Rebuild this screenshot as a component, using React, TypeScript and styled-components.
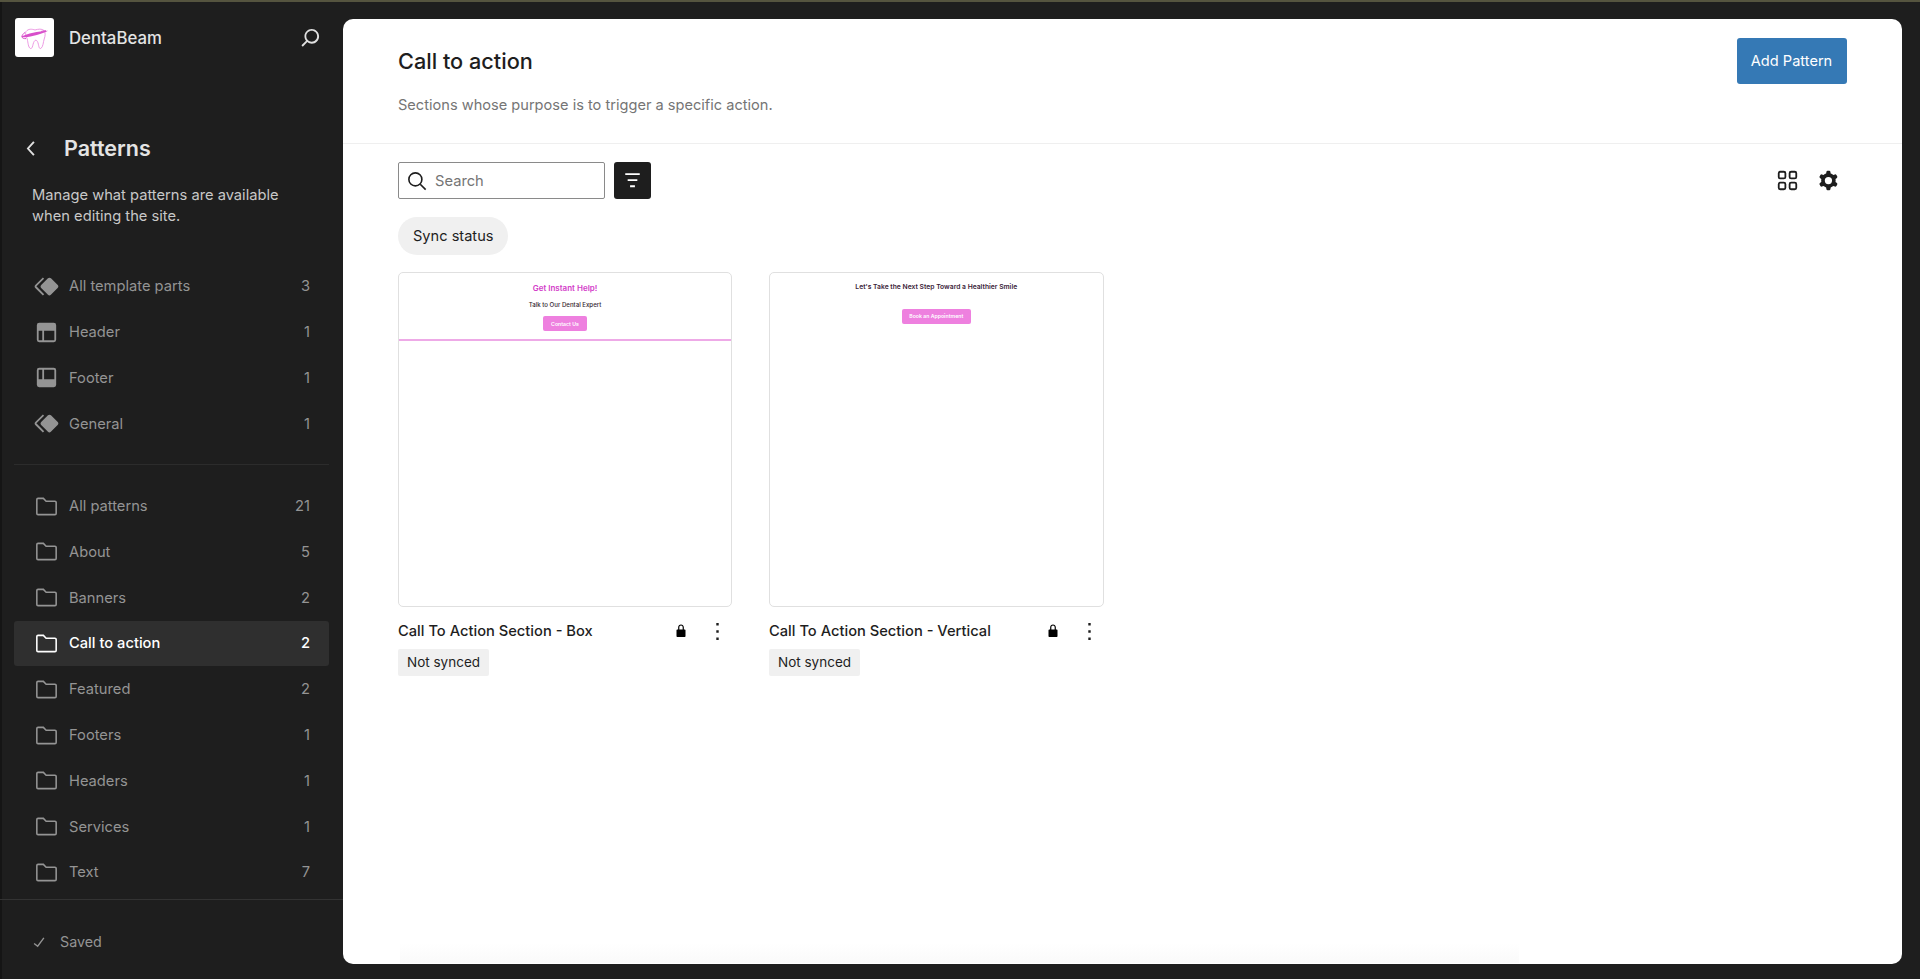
import React from "react";
import styled, { createGlobalStyle } from "styled-components";

const Global = createGlobalStyle`
  html, body { margin: 0; padding: 0; height: 100%; background: #1e1e1e; }
  body { font-family: Inter, "Liberation Sans", sans-serif; -webkit-font-smoothing: antialiased; overflow: hidden; }
  #root { height: 100%; }
`;

const Page = styled.div`
  display: flex;
  height: 979px;
  box-sizing: border-box;
  background: #1e1e1e;
  border-top: 2px solid #55543f;
`;

const Sidebar = styled.aside`
  width: 343px;
  flex: none;
  display: flex;
  flex-direction: column;
  color: #e0e0e0;
  box-shadow: inset 2px 0 0 #151515;
`;

const SiteHeader = styled.header`
  display: flex;
  align-items: center;
  height: 39px;
  margin-top: 16px;
  padding: 0 18px 0 14.5px;
`;

const LogoTile = styled.div`
  width: 39px;
  height: 39px;
  flex: none;
  background: #fff;
  border-radius: 3px;
  display: flex;
  align-items: center;
  justify-content: center;
`;

const SiteName = styled.span`
  margin-left: 15.5px;
  font-size: 16.8px;
  font-weight: 500;
  color: #e4e4e4;
  flex: 1;
`;

const HeaderIcon = styled.svg`
  width: 29px;
  height: 29px;
  fill: #e0e0e0;
  flex: none;
`;

const NavTitleRow = styled.div`
  display: flex;
  align-items: center;
  height: 30px;
  margin-top: 76px;
  padding-left: 17px;
`;

const BackIcon = styled.svg`
  width: 29px;
  height: 29px;
  fill: #e0e0e0;
  flex: none;
`;

const NavTitle = styled.h1`
  margin: 0 0 0 18px;
  font-size: 21.5px;
  font-weight: 600;
  color: #e4e4e4;
  line-height: 30px;
`;

const NavDescription = styled.p`
  margin: 21.5px 0 0;
  padding: 0 32px;
  font-size: 14.7px;
  line-height: 21px;
  color: #c8c8c8;
`;

const NavList = styled.ul<{ $top: number }>`
  list-style: none;
  margin: ${(p) => p.$top}px 0 0;
  padding: 0;
`;

const NavRow = styled.li<{ $active?: boolean }>`
  display: flex;
  align-items: center;
  height: 45.8px;
  box-sizing: border-box;
  margin: 0 14px;
  padding: 0 19px 0 17.5px;
  border-radius: 3px;
  font-size: 14.7px;
  font-weight: ${(p) => (p.$active ? 500 : 400)};
  color: ${(p) => (p.$active ? "#fff" : "#949494")};
  background: ${(p) => (p.$active ? "#2f2f2f" : "transparent")};
`;

const NavIcon = styled.svg<{ $active?: boolean }>`
  width: 29px;
  height: 29px;
  flex: none;
  fill: ${(p) => (p.$active ? "#fff" : "#949494")};
  margin-right: 8.5px;
`;

const FolderShape = styled.path`
  fill: none;
  stroke: currentColor;
  stroke-width: 1.3;
`;

const NavLabel = styled.span`
  flex: 1;
`;

const Divider = styled.div`
  height: 1px;
  margin: 17.5px 14px 0;
  background: #2c2c2c;
`;

const SideFooter = styled.div`
  margin-top: 3.5px;
  border-top: 1px solid #333;
  flex: 1;
  padding: 30px 0 0 28px;
  font-size: 14.3px;
  color: #949494;
`;

const SavedRow = styled.div`
  display: flex;
  align-items: center;
  height: 24px;
`;

const SavedIcon = styled.svg`
  width: 22px;
  height: 22px;
  fill: #949494;
  margin-right: 10px;
  flex: none;
`;

const Panel = styled.main`
  width: 1559px;
  flex: none;
  box-sizing: border-box;
  height: 945px;
  margin-top: 17px;
  background: #fff;
  border-radius: 10px;
  display: flex;
  flex-direction: column;
  color: #1e1e1e;
  overflow: hidden;
  position: relative;
`;

const PanelHeader = styled.header`
  display: flex;
  justify-content: space-between;
  align-items: flex-start;
  height: 125px;
  box-sizing: border-box;
  flex: none;
  padding: 18.5px 55.5px 0 55px;
  border-bottom: 1px solid #efefef;
`;

const Title = styled.h2`
  margin: 7px 0 0;
  font-size: 21.7px;
  line-height: 32px;
  font-weight: 500;
  color: #1e1e1e;
`;

const Subtitle = styled.p`
  margin: 16px 0 0;
  font-size: 14.6px;
  line-height: 24px;
  color: #757575;
`;

const PrimaryButton = styled.button`
  width: 110px;
  height: 46px;
  border: 0;
  border-radius: 3px;
  background: #3579b5;
  color: #fff;
  font: 400 14.6px Inter, sans-serif;
`;

const Toolbar = styled.div`
  display: flex;
  align-items: center;
  padding: 18px 55px 0;
  flex: none;
`;

const SearchBox = styled.div`
  display: flex;
  align-items: center;
  width: 207px;
  height: 37px;
  box-sizing: border-box;
  border: 1px solid #8a8a8a;
  border-radius: 2px;
  padding-left: 5px;
  color: #757575;
  font-size: 14.7px;
`;

const SearchIcon = styled.svg`
  width: 26px;
  height: 26px;
  fill: none;
  stroke: #1e1e1e;
  stroke-width: 1.5;
  margin-right: 5px;
  flex: none;
`;

const FilterButton = styled.div`
  width: 37px;
  height: 37px;
  margin-left: 9px;
  background: #1e1e1e;
  border-radius: 3px;
  display: flex;
  align-items: center;
  justify-content: center;
`;

const FilterIcon = styled.svg`
  width: 29px;
  height: 29px;
  fill: #fff;
`;

const ToolbarRight = styled.div`
  margin-left: auto;
  display: flex;
  align-items: center;
  gap: 12px;
  margin-right: 4px;
`;

const ToolIcon = styled.svg`
  width: 29px;
  height: 29px;
  fill: #1e1e1e;
  flex: none;
`;

const ChipRow = styled.div`
  padding: 18px 55px 0;
  flex: none;
`;

const Chip = styled.div`
  display: inline-flex;
  align-items: center;
  height: 38px;
  padding: 0 15px;
  background: #f0f0f0;
  border-radius: 19px;
  font-size: 14.6px;
  color: #1e1e1e;
`;

const CardGrid = styled.div`
  display: grid;
  grid-template-columns: 334px 334.5px;
  column-gap: 37px;
  padding: 17px 55px 0;
`;

const Card = styled.article`
  display: flex;
  flex-direction: column;
  min-width: 0;
`;

const Thumb = styled.div`
  height: 335px;
  box-sizing: border-box;
  border: 1px solid #e0e0e0;
  border-radius: 5px;
  overflow: hidden;
  background: #fff;
  display: flex;
  flex-direction: column;
  align-items: center;
`;

const BoxPreview = styled.div`
  width: 100%;
  height: 68px;
  box-sizing: border-box;
  flex: none;
  border-bottom: 2px solid #eeaae7;
  display: flex;
  flex-direction: column;
  align-items: center;
  padding-top: 9px;
`;

const PreviewHeading = styled.div<{ $color: string; $size: number }>`
  color: ${(p) => p.$color};
  font-size: ${(p) => p.$size}px;
  font-weight: 600;
  line-height: 12px;
  white-space: nowrap;
`;

const PreviewText = styled.div`
  margin-top: 6px;
  color: #33252f;
  font-size: 6.1px;
  font-weight: 500;
  line-height: 10px;
  white-space: nowrap;
`;

const PreviewButton = styled.div<{ $width: number; $top: number }>`
  margin-top: ${(p) => p.$top}px;
  width: ${(p) => p.$width}px;
  height: 15px;
  background: #ee80df;
  border-radius: 2px;
  color: #fff;
  font-size: 5.2px;
  font-weight: 600;
  display: flex;
  align-items: center;
  justify-content: center;
  white-space: nowrap;
`;

const VerticalPreview = styled.div`
  display: flex;
  flex-direction: column;
  align-items: center;
  padding-top: 8px;
`;

const CardMeta = styled.div`
  display: flex;
  align-items: center;
  height: 29px;
  margin-top: 9.5px;
`;

const CardName = styled.span`
  flex: 1;
  font-size: 14.7px;
  font-weight: 500;
  color: #1e1e1e;
  white-space: nowrap;
`;

const LockIcon = styled.svg`
  width: 18px;
  height: 18px;
  fill: #000;
  flex: none;
`;

const MoreIcon = styled.svg`
  width: 29px;
  height: 29px;
  fill: #1e1e1e;
  flex: none;
  margin: 0 0 0 13px;
`;

const Badge = styled.div`
  align-self: flex-start;
  margin-top: 3px;
  height: 27px;
  display: flex;
  align-items: center;
  padding: 0 9px;
  background: #f0f0f0;
  border-radius: 2px;
  font-size: 13.5px;
  color: #1e1e1e;
`;

const BottomFade = styled.div`
  position: absolute;
  left: 57px;
  width: 1119px;
  bottom: 1px;
  height: 20px;
  background: linear-gradient(to bottom, #fff, #fafafa);
`;

const P = {
  symbol: "M21.3 10.8l-5.6-5.6c-.7-.7-1.8-.7-2.5 0l-5.6 5.6c-.7.7-.7 1.8 0 2.5l5.6 5.6c.3.3.8.5 1.2.5s.9-.2 1.2-.5l5.6-5.6c.8-.7.8-1.9.1-2.5zm-17.6 1L10 5.5l-1-1-6.3 6.3c-.7.7-.7 1.8 0 2.5L9 19.5l1.1-1.1-6.3-6.3c-.2 0-.2-.2-.1-.3z",
  header: "M18.5 10.5H10v8h8a.5.5 0 00.5-.5v-7.5zm-10 0h-3V18a.5.5 0 00.5.5h2.5v-8zM6 4h12a2 2 0 012 2v12a2 2 0 01-2 2H6a2 2 0 01-2-2V6a2 2 0 012-2z",
  footer: "M18 5.5h-8v8h8.5V6a.5.5 0 00-.5-.5zm-9.5 8h-3V6a.5.5 0 01.5-.5h2.5v8zM6 4h12a2 2 0 012 2v12a2 2 0 01-2 2H6a2 2 0 01-2-2V6a2 2 0 012-2z",
  search: "M13 5c-3.3 0-6 2.7-6 6 0 1.4.5 2.7 1.3 3.7l-3.8 3.8 1.1 1.1 3.8-3.8c1 .8 2.3 1.3 3.7 1.3 3.3 0 6-2.7 6-6S16.3 5 13 5zm0 10.5c-2.5 0-4.5-2-4.5-4.5s2-4.5 4.5-4.5 4.5 2 4.5 4.5-2 4.5-4.5 4.5z",
  back: "M14.6 7l-1.2-1L8 12l5.4 6 1.2-1-4.6-5z",
  check: "M16.7 7.1l-6.3 8.5-3.3-2.5-.9 1.2 4.5 3.4L17.9 8z",
  funnel: "M10 17.5H14V16H10V17.5ZM6 6V7.5H18V6H6ZM8 12.5H16V11H8V12.5Z",
  grid: "M6 5.5h3a.5.5 0 01.5.5v3a.5.5 0 01-.5.5H6a.5.5 0 01-.5-.5V6a.5.5 0 01.5-.5zM4 6a2 2 0 012-2h3a2 2 0 012 2v3a2 2 0 01-2 2H6a2 2 0 01-2-2V6zm11-.5h3a.5.5 0 01.5.5v3a.5.5 0 01-.5.5h-3a.5.5 0 01-.5-.5V6a.5.5 0 01.5-.5zM13 6a2 2 0 012-2h3a2 2 0 012 2v3a2 2 0 01-2 2h-3a2 2 0 01-2-2V6zm5 8.5h-3a.5.5 0 00-.5.5v3a.5.5 0 00.5.5h3a.5.5 0 00.5-.5v-3a.5.5 0 00-.5-.5zM15 13a2 2 0 00-2 2v3a2 2 0 002 2h3a2 2 0 002-2v-3a2 2 0 00-2-2h-3zm-9 1.5h3a.5.5 0 01.5.5v3a.5.5 0 01-.5.5H6a.5.5 0 01-.5-.5v-3a.5.5 0 01.5-.5zM4 15a2 2 0 012-2h3a2 2 0 012 2v3a2 2 0 01-2 2H6a2 2 0 01-2-2v-3z",
  cog: "M10.289 4.836A1 1 0 0111.275 4h1.306a1 1 0 01.987.836l.244 1.466c.787.26 1.503.679 2.108 1.218l1.393-.522a1 1 0 011.216.437l.653 1.13a1 1 0 01-.23 1.273l-1.148.944a6.025 6.025 0 010 2.435l1.149.946a1 1 0 01.23 1.272l-.653 1.13a1 1 0 01-1.216.437l-1.394-.522c-.605.54-1.32.958-2.108 1.218l-.244 1.466a1 1 0 01-.987.836h-1.306a1 1 0 01-.986-.836l-.244-1.466a5.995 5.995 0 01-2.108-1.218l-1.394.522a1 1 0 01-1.217-.436l-.653-1.131a1 1 0 01.23-1.272l1.149-.946a6.026 6.026 0 010-2.435l-1.148-.944a1 1 0 01-.23-1.272l.653-1.131a1 1 0 011.217-.437l1.393.522a5.994 5.994 0 012.108-1.218l.244-1.466zM14.929 12a3 3 0 11-6 0 3 3 0 016 0z",
  lock: "M17 10h-1.2V7c0-2.1-1.7-3.8-3.8-3.8-2.1 0-3.8 1.7-3.8 3.8v3H7c-.6 0-1 .4-1 1v8c0 .6.4 1 1 1h10c.6 0 1-.4 1-1v-8c0-.6-.4-1-1-1zm-2.8 0H9.8V7c0-1.2 1-2.2 2.2-2.2s2.2 1 2.2 2.2v3z",
  more: "M13 19h-2v-2h2v2zm0-6h-2v-2h2v2zm0-6h-2V5h2v2z",
  folder: "M5 5.25h4.4l2.3 2.4H19a1 1 0 011 1v9.1a1 1 0 01-1 1H5a1 1 0 01-1-1V6.25a1 1 0 011-1z",
};

const Folder = ({ active }: { active?: boolean }) => (
  <NavIcon $active={active} viewBox="0 0 24 24" style={{ color: active ? "#fff" : "#949494" }}>
    <FolderShape d={P.folder} />
  </NavIcon>
);

const Glyph = ({ d }: { d: string }) => (
  <NavIcon viewBox="0 0 24 24">
    <path d={d} fillRule="evenodd" clipRule="evenodd" />
  </NavIcon>
);

const Logo = () => (
  <svg width="39" height="39" viewBox="0 0 39 39" fill="none">
    <path
      d="M11 13.500c2.500-3 6-2.500 9-1.500 3-1 7-1.500 9 .5 1.700 2 1.300 5.500.2 8.500-1 3-1 8-3.400 9.500-1.700.6-2-2.500-2.500-4.500-.5-2-1.300-3.800-2.500-3.800s-2.200 2-2.700 4c-.5 2-1 4.800-2.700 4.300-2.200-1-2.300-6-3.200-9.500-.8-2.500-2.400-5.500-1.200-7.500z"
      stroke="#ea8fe0"
      strokeWidth=".9"
    />
    <path d="M6.500 18.500c6-2.800 16-5 26.500-5.700-5.500 3-16.500 6.200-23 6.500-1.600.1-3-.1-3.500-.8z" fill="#d84fca" />
    <path d="M10 14.500c-2 1.300-3.300 3-3 4.500.3 1.300 2 1.800 4 1.600" stroke="#d84fca" strokeWidth="1" />
    <path d="M26 13.500c1.500-.6 3-.9 5-1" stroke="#d84fca" strokeWidth=".8" />
  </svg>
);

const templateRows = [
  { label: "All template parts", count: 3, d: P.symbol },
  { label: "Header", count: 1, d: P.header },
  { label: "Footer", count: 1, d: P.footer },
  { label: "General", count: 1, d: P.symbol },
];

const patternRows = [
  { label: "All patterns", count: 21 },
  { label: "About", count: 5 },
  { label: "Banners", count: 2 },
  { label: "Call to action", count: 2, active: true },
  { label: "Featured", count: 2 },
  { label: "Footers", count: 1 },
  { label: "Headers", count: 1 },
  { label: "Services", count: 1 },
  { label: "Text", count: 7 },
];

const PatternCard = ({ name, children }: { name: string; children: React.ReactNode }) => (
  <Card>
    <Thumb>{children}</Thumb>
    <CardMeta>
      <CardName>{name}</CardName>
      <LockIcon viewBox="0 0 24 24">
        <path d={P.lock} fillRule="evenodd" />
      </LockIcon>
      <MoreIcon viewBox="0 0 24 24">
        <path d={P.more} />
      </MoreIcon>
    </CardMeta>
    <Badge>Not synced</Badge>
  </Card>
);

export default function App() {
  return (
    <Page>
      <Global />
      <Sidebar>
        <SiteHeader>
          <LogoTile>
            <Logo />
          </LogoTile>
          <SiteName>DentaBeam</SiteName>
          <HeaderIcon viewBox="0 0 24 24">
            <path d={P.search} />
          </HeaderIcon>
        </SiteHeader>
        <NavTitleRow>
          <BackIcon viewBox="0 0 24 24">
            <path d={P.back} />
          </BackIcon>
          <NavTitle>Patterns</NavTitle>
        </NavTitleRow>
        <NavDescription>
          Manage what patterns are available
          <br />
          when editing the site.
        </NavDescription>
        <NavList $top={37}>
          {templateRows.map((r) => (
            <NavRow key={r.label}>
              <Glyph d={r.d} />
              <NavLabel>{r.label}</NavLabel>
              <span>{r.count}</span>
            </NavRow>
          ))}
        </NavList>
        <Divider />
        <NavList $top={18}>
          {patternRows.map((r) => (
            <NavRow key={r.label} $active={r.active}>
              <Folder active={r.active} />
              <NavLabel>{r.label}</NavLabel>
              <span>{r.count}</span>
            </NavRow>
          ))}
        </NavList>
        <SideFooter>
          <SavedRow>
            <SavedIcon viewBox="0 0 24 24">
              <path d={P.check} />
            </SavedIcon>
            Saved
          </SavedRow>
        </SideFooter>
      </Sidebar>
      <Panel>
        <PanelHeader>
          <div>
            <Title>Call to action</Title>
            <Subtitle>Sections whose purpose is to trigger a specific action.</Subtitle>
          </div>
          <PrimaryButton>Add Pattern</PrimaryButton>
        </PanelHeader>
        <Toolbar>
          <SearchBox>
            <SearchIcon viewBox="0 0 24 24">
              <circle cx="10.500" cy="10.500" r="6" />
              <path d="M15 15l5 5" />
            </SearchIcon>
            Search
          </SearchBox>
          <FilterButton>
            <FilterIcon viewBox="0 0 24 24">
              <path d={P.funnel} />
            </FilterIcon>
          </FilterButton>
          <ToolbarRight>
            <ToolIcon viewBox="0 0 24 24">
              <path d={P.grid} fillRule="evenodd" clipRule="evenodd" />
            </ToolIcon>
            <ToolIcon viewBox="0 0 24 24">
              <path d={P.cog} fillRule="evenodd" clipRule="evenodd" />
            </ToolIcon>
          </ToolbarRight>
        </Toolbar>
        <ChipRow>
          <Chip>Sync status</Chip>
        </ChipRow>
        <CardGrid>
          <PatternCard name="Call To Action Section - Box">
            <BoxPreview>
              <PreviewHeading $color="#d340c9" $size={8}>
                Get Instant Help!
              </PreviewHeading>
              <PreviewText>Talk to Our Dental Expert</PreviewText>
              <PreviewButton $width={44} $top={6}>
                Contact Us
              </PreviewButton>
            </BoxPreview>
          </PatternCard>
          <PatternCard name="Call To Action Section - Vertical">
            <VerticalPreview>
              <PreviewHeading $color="#3a1c38" $size={6.75}>
                Let's Take the Next Step Toward a Healthier Smile
              </PreviewHeading>
              <PreviewButton $width={69} $top={15.5}>
                Book an Appointment
              </PreviewButton>
            </VerticalPreview>
          </PatternCard>
        </CardGrid>
        <BottomFade />
      </Panel>
    </Page>
  );
}
